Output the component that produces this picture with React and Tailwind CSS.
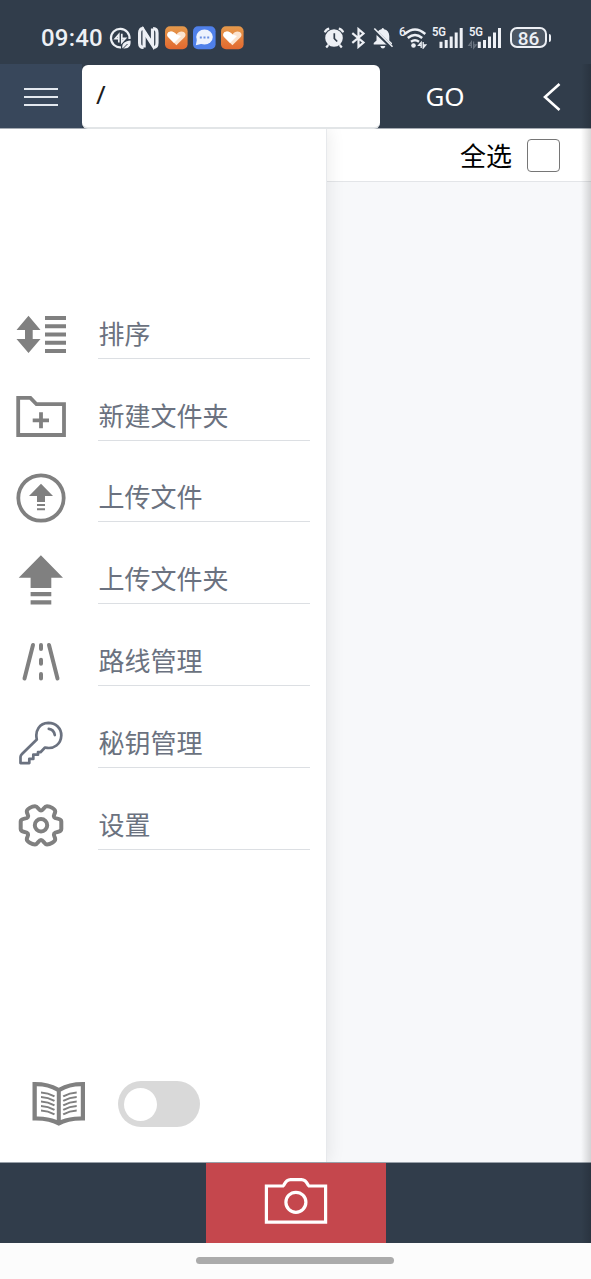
import React, { useState } from 'react';

const SortIcon = () => (
  <svg className="w-[50px] h-[50px]" viewBox="16 309 50 50" fill="#808080">
    <path d="M28.5 315.8L40.5 330H32.7V339H40.5L28.5 353L16.5 339H25V330H16.5Z" />
    <path d="M45 316h21v4h-21zM45 324.3h21v4h-21zM45 332.5h21v4h-21zM45 340.7h21v4h-21zM45 349h21v4h-21z" />
  </svg>
);

const NewFolderIcon = () => (
  <svg className="w-[50px] h-[50px]" viewBox="16 391 50 50" fill="none" stroke="#808080" strokeWidth="3.8">
    <path d="M18.2 397.9H30.4L36.5 404.2H64V435H18.2Z" />
    <path d="M41 412.3V428.3M32.7 420.3H49" />
  </svg>
);

const UploadFileIcon = () => (
  <svg className="w-[50px] h-[50px]" viewBox="16 473 50 50" fill="#808080">
    <circle cx="41" cy="498" r="22.7" fill="none" stroke="#808080" strokeWidth="3.8" />
    <path d="M41 483.7L53 496H45V502H37V496H29Z" />
    <path d="M37 504h8v2h-8zM37 508.3h8v2h-8z" />
  </svg>
);

const UploadFolderIcon = () => (
  <svg className="w-[50px] h-[50px]" viewBox="16 555 50 50" fill="#808080">
    <path d="M40.9 555.2L63 577.8H51.3V588H30.6V577.8H18.7Z" />
    <path d="M30.6 592h20.7v4.2H30.6zM30.6 600.3h20.7v4.2H30.6z" />
  </svg>
);

const RouteIcon = () => (
  <svg className="w-[50px] h-[50px]" viewBox="16 637 50 50" fill="none" stroke="#808080" strokeWidth="4" strokeLinecap="round">
    <path d="M33 645L24.5 678.5M49 645L57.5 678.5M41 645V649M41 659.7V663.7M41 674V678.5" />
  </svg>
);

const KeyIcon = () => (
  <svg className="w-[50px] h-[50px]" viewBox="16 718.5 50 50" fill="none" stroke="#6b7280" strokeWidth="2.7" strokeLinejoin="round" strokeLinecap="round">
    <path d="M36.8 740C34.8 731 39.5 723.7 48.3 723.4C56 723.4 61.3 729 61.3 736C61 744.5 54 750.2 45 748L40.5 752.7H38V755.2H33.3V759.4H29.3V763.6H20.5V757.5Q20.5 756 22 754.5Z" />
    <path d="M48.8 729.4Q53.7 729.8 54.8 735.6" />
  </svg>
);

const GearIcon = () => (
  <svg className="w-[50px] h-[50px]" viewBox="16 800 50 50" fill="none" stroke="#808080" strokeWidth="4" strokeLinejoin="round">
    <circle cx="41" cy="825.3" r="6.2" />
    <path d="M41 810.5C43.5 810.5 44 806.3 47 806.3C50 806.3 55.2 808.8 55.2 811.5C55.2 814 53 814.8 54.2 817.2C55.6 819.5 61.3 817.7 61.3 821.5V829C61.3 833 55.6 831.2 54.2 833.5C53 835.9 55.2 836.7 55.2 839.2C55.2 841.8 50 844.4 47 844.4C44 844.4 43.5 840 41 840C38.5 840 38 844.4 35 844.4C32 844.4 26.8 841.8 26.8 839.2C26.8 836.7 29 835.9 27.8 833.5C26.4 831.2 20.7 833 20.7 829V821.5C20.7 817.7 26.4 819.5 27.8 817.2C29 814.8 26.8 814 26.8 811.5C26.8 808.8 32 806.3 35 806.3C38 806.3 38.5 810.5 41 810.5Z" />
  </svg>
);

const BookIcon = () => (
  <svg className="w-[53px] h-[46px]" viewBox="32 1081 53 46">
    <path
      d="M32.5 1082Q48 1081.5 58.8 1087.8Q69.5 1081.5 85 1082V1120.5Q69 1119.8 58.8 1125.8Q48.5 1119.8 32.5 1120.5ZM36.8 1086.3V1116.5Q48 1116.3 56.8 1120V1091.5Q48 1086.3 36.8 1086.3ZM80.8 1086.3Q69.5 1086.3 60.8 1091.5V1120Q69.5 1116.3 80.8 1116.5Z"
      fill="#808080"
      fillRule="evenodd"
    />
    <path
      d="M41 1092.5Q48 1092.8 54.5 1096.3M41 1097Q48 1097.3 54.5 1100.8M41 1101.5Q48 1101.8 54.5 1105.3M41 1106Q48 1106.3 54.5 1109.8M41 1110.5Q48 1110.8 54.5 1114.3M76.7 1092.5Q69.7 1092.8 63.2 1096.3M76.7 1097Q69.7 1097.3 63.2 1100.8M76.7 1101.5Q69.7 1101.8 63.2 1105.3M76.7 1106Q69.7 1106.3 63.2 1109.8M76.7 1110.5Q69.7 1110.8 63.2 1114.3"
      fill="none"
      stroke="#808080"
      strokeWidth="2.1"
    />
  </svg>
);

const CameraIcon = () => (
  <svg className="w-[64px] h-[48px]" viewBox="264.5 1177 64 48" fill="none" stroke="#fff" strokeWidth="3.2">
    <path d="M266.9 1186H283.5L284.5 1184.8Q287 1179.6 291 1179.6H302Q306 1179.6 308.5 1184.8L309.5 1186H326.1V1222.1H266.9Z" />
    <circle cx="296.4" cy="1202.3" r="10" />
  </svg>
);

const HeartApp = () => (
  <svg className="w-[23px] h-[24px]" viewBox="165 26 23 24">
    <defs>
      <linearGradient id="heartBg" x1="0" y1="0" x2="0" y2="1">
        <stop offset="0" stopColor="#e59a4c" />
        <stop offset="1" stopColor="#e2682f" />
      </linearGradient>
    </defs>
    <rect x="165" y="26.3" width="22.6" height="23" rx="5" fill="url(#heartBg)" />
    <path d="M176.4 45.2L168.6 37.6C165.8 34.4 168 31.4 171 31.4C173.6 31.4 175 32.8 176.4 34.4C177.8 32.4 179.4 31.4 181.6 31.4C185 31.4 187 34.6 184.3 37.6Z" fill="#fbe3cf" />
    <path d="M176.4 34.4C175 32.8 173.6 31.4 171 31.4C168 31.4 165.8 34.4 168.6 37.6L174 42.9L181 36Z" fill="#fff" />
  </svg>
);

const ChatApp = () => (
  <svg className="w-[23px] h-[24px]" viewBox="193 26 23 24">
    <rect x="193" y="26.3" width="22.6" height="23" rx="5" fill="#4f80ea" />
    <ellipse cx="204.5" cy="37" rx="8.3" ry="7.4" fill="#edf2fd" />
    <path d="M197 39L195.8 45.2L202 43.8Z" fill="#edf2fd" />
    <path d="M199.8 36.5h2v2h-2zM203.5 36.5h2v2h-2zM207.2 36.5h2v2h-2z" fill="#6a8fe3" />
  </svg>
);

const StatusBar = () => (
  <div className="h-[64px] shrink-0 bg-[#313d4b] flex items-center justify-between pl-[41px] pr-[40px] pt-[11px] text-[#edf0f5]">
    <div className="flex items-center gap-[5px]">
      <span className="text-[24px] leading-none font-medium w-[63px] pt-px tracking-[0.2px] font-['Roboto',sans-serif]">09:40</span>
      <svg className="w-[23px] h-[24px]" viewBox="109 26 23 24" fill="none" stroke="currentColor" strokeWidth="2.2">
        <path d="M129.5 39A9.3 9.3 0 1 0 121 47.4" />
        <path d="M118.8 42.5V34.5L115.2 38.7H118.8M121.8 33.7V42.3L125.4 38.3H121.8" strokeWidth="1.7" />
        <path d="M122.3 48.3C121.5 43 125 41.3 130.5 40.5C131.3 46 128.5 49.3 122.3 48.3Z" fill="currentColor" stroke="none" />
        <path d="M122 49.5L127.5 44" stroke="#313d4b" strokeWidth="1" />
      </svg>
      <svg className="w-[23px] h-[24px]" viewBox="137 26 23 24" fill="none">
        <path d="M143.5 28.6Q139.6 28.2 139.6 33V43Q139.6 47.5 143.5 47.3" stroke="#edf0f5" strokeWidth="3.2" />
        <path d="M153.2 47.4Q157 47.8 157 43V33Q157 28.5 153.2 28.7" stroke="#edf0f5" strokeWidth="3.2" />
        <path d="M144.1 47.5V31L152.5 44" stroke="#edf0f5" strokeWidth="3.2" />
        <path d="M152.5 28.5V45L144.1 32" stroke="#edf0f5" strokeWidth="3.2" />
      </svg>
      <HeartApp />
      <ChatApp />
      <HeartApp />
    </div>
    <div className="flex items-center gap-[6px]">
      <svg className="w-[22px] h-[22px]" viewBox="322 27 22 22" fill="none" stroke="currentColor">
        <circle cx="333" cy="38" r="8.8" fill="currentColor" stroke="none" />
        <path d="M323.8 32.3Q325 29.3 328.2 28.6M342.2 32.3Q341 29.3 337.8 28.6M327.3 45L325.2 47.5M338.7 45L340.8 47.5" strokeWidth="2.2" />
        <path d="M333.3 33.3V38.5L336.2 41.5" stroke="#313d4b" strokeWidth="1.7" />
      </svg>
      <svg className="w-[15px] h-[22px]" viewBox="350 27 15 22" fill="none" stroke="currentColor" strokeWidth="2.2">
        <path d="M351.3 33.2L362.5 42.5L357.5 46.8V29.2L362.5 33.5L351.3 42.8" />
      </svg>
      <svg className="w-[22px] h-[22px]" viewBox="370 27 22 22" fill="none">
        <path d="M371.7 44.6V43L374.5 40.5V36Q374.8 30.3 379.5 29.3Q380.8 26.5 382.1 29.3Q387 30.3 387.3 36V40.5L390 43V44.6ZM378.3 46H383.4Q382.6 48.6 380.9 48.6Q379 48.6 378.3 46Z" fill="currentColor" />
        <path d="M371 29L389.8 47.3" stroke="#313d4b" strokeWidth="3.4" />
        <path d="M372.3 28.5L390.5 46.7" stroke="currentColor" strokeWidth="1.6" />
      </svg>
      <div className="flex -ml-px">
        <span className="text-[12px] leading-none font-medium w-[5px] -mt-px font-['Roboto',sans-serif]">6</span>
        <svg className="w-[23px] h-[22px]" viewBox="403 27 23 22" fill="none" stroke="currentColor" strokeWidth="2.4">
          <path d="M403.7 34Q414 24.8 424.3 34M406.8 38Q414 31.8 421.2 38M410 41.8Q414 38.8 418 41.8" />
          <circle cx="412.5" cy="45.5" r="2.3" fill="currentColor" stroke="none" />
          <path d="M420.2 48V42.4L417.6 45.3H420.2M422.2 42V48L424.8 45H422.2" strokeWidth="1.3" />
        </svg>
      </div>
      <div className="flex -ml-px">
        <span className="block text-[12.5px] leading-none font-semibold w-[6px] origin-left scale-x-[0.9] tracking-[-0.3px] whitespace-nowrap -mt-[1px] font-['Roboto',sans-serif]">5G</span>
        <svg className="w-[25px] h-[22px]" viewBox="437 27 25 22" stroke="currentColor" strokeWidth="3">
          <path d="M440 41.8V48M445.2 40V48M450.2 36.5V48M455.2 32.5V48M460.2 28V48" />
        </svg>
      </div>
      <div className="flex">
        <span className="block text-[12.5px] leading-none font-semibold w-[7px] origin-left scale-x-[0.9] tracking-[-0.3px] whitespace-nowrap -mt-[1px] font-['Roboto',sans-serif]">5G</span>
        <svg className="w-[25px] h-[22px] overflow-visible" viewBox="476 27 25 22" fill="none" stroke="currentColor" strokeWidth="3">
          <path d="M471.4 48V41.8L468.8 45.3H471.4M473.6 41.5V48L476.2 44.8H473.6" strokeWidth="1.2" stroke="#67717e" />
          <path d="M479.3 41.8V48M484.5 40V48M489.5 36.5V48M494.5 32.5V48M499.5 28V48" />
        </svg>
      </div>
      <div className="flex items-center ml-[3px]">
        <div className="w-[37px] h-[21px] rounded-[7px] border-2 border-[#edf0f5] bg-[#4b5663] flex items-center justify-center text-[19px] leading-none font-medium pt-px font-['Roboto',sans-serif]">86</div>
        <div className="ml-[2px] w-[2px] h-[8px] rounded-r bg-[#edf0f5]"></div>
      </div>
    </div>
  </div>
);

const MENU = [
  { label: '排序', icon: SortIcon },
  { label: '新建文件夹', icon: NewFolderIcon },
  { label: '上传文件', icon: UploadFileIcon },
  { label: '上传文件夹', icon: UploadFolderIcon },
  { label: '路线管理', icon: RouteIcon },
  { label: '秘钥管理', icon: KeyIcon },
  { label: '设置', icon: GearIcon },
];

const App = () => {
  const [path, setPath] = useState('/');
  const [reading, setReading] = useState(false);

  return (
    <div className="w-full h-screen flex flex-col overflow-hidden bg-[#fcfcfc] font-['Noto_Sans','Noto_Sans_CJK_SC',sans-serif]">
      <StatusBar />

      <div className="relative flex-1 min-h-0 flex flex-col">
        {/* Address bar */}
        <div className="h-[65px] shrink-0 flex bg-[#313d4b] border-b border-[#a5abb3] text-white">
          <button className="w-[82px] bg-[#38475b] flex flex-col items-center justify-center gap-[6.6px] pt-[2px]">
            <span className="block w-[34px] h-[1.5px] bg-[#e3e8ef]"></span>
            <span className="block w-[34px] h-[1.5px] bg-[#e3e8ef]"></span>
            <span className="block w-[34px] h-[1.5px] bg-[#e3e8ef]"></span>
          </button>
          <input
            value={path}
            onChange={(e) => setPath(e.target.value)}
            className="w-[298px] h-[64px] mt-px rounded-[6px] bg-white border-b-2 border-[#e2e5e7] px-[14px] pb-[4px] text-[26px] font-normal text-[#1c1c1c] outline-none font-['Noto_Sans',sans-serif]"
          />
          <button className="w-[130px] text-[26px] font-normal font-['Noto_Sans',sans-serif]">GO</button>
          <button className="flex-1 flex items-center justify-center pt-px">
            <svg className="w-[20px] h-[30px]" viewBox="541 82 20 30" fill="none" stroke="#fff" strokeWidth="2.6">
              <path d="M559.5 84L545 97L559.5 110" />
            </svg>
          </button>
        </div>

        <div className="flex-1 min-h-0 flex">
          {/* Side menu */}
          <div className="relative z-10 w-[327px] bg-white border-r border-[#e7e9ec] flex flex-col justify-between shadow-[2px_0_16px_rgba(0,0,0,0.08)] [clip-path:inset(0_-24px_0_0)]">
            <div className="pt-[164.5px]">
              {MENU.map(({ label, icon: Icon }) => (
                <div key={label} className="h-[81.8px] flex items-center pl-[16px] pr-[16px]">
                  <Icon />
                  <div className="ml-[32px] w-[211.5px] h-[49px] border-b border-[#dcdfe3] flex items-center pl-[0.5px] text-[26px] leading-none text-[#6b7280]">
                    {label}
                  </div>
                </div>
              ))}
            </div>
            <div className="flex items-center pl-[32px] pb-[35px]">
              <BookIcon />
              <button
                onClick={() => setReading(!reading)}
                className={`ml-[33px] w-[82px] h-[46px] rounded-full flex items-center px-[6px] ${
                  reading ? 'bg-[#2196f3] justify-end' : 'bg-[#d9d9d9]'
                }`}
              >
                <span className="block w-[33px] h-[33px] rounded-full bg-white"></span>
              </button>
            </div>
          </div>

          {/* File list */}
          <div className="flex-1 bg-[#f7f8fa]">
            <label className="h-[53px] flex items-center justify-end gap-[15px] pr-[31px] bg-white border-b border-[#e3e5e8] text-[26px] leading-none text-black">
              <span className="pt-px">全选</span>
              <input type="checkbox" className="appearance-none w-[33px] h-[33px] rounded-[4px] border-[1.5px] border-[#767676] bg-white" />
            </label>
          </div>
        </div>

        {/* Bottom bar */}
        <div className="h-[81px] shrink-0 flex bg-[#313d4b] border-t border-[#98a0a9]">
          <button className="ml-[206px] w-[180px] bg-[#c5474d] flex items-center justify-center pb-[4px]">
            <CameraIcon />
          </button>
        </div>

        <div className="absolute right-0 top-0 bottom-0 w-[10px] bg-linear-to-l from-black/15 to-transparent pointer-events-none"></div>
      </div>

      <div className="h-[36px] shrink-0 flex justify-center pr-[2px]">
        <div className="mt-[14px] w-[198px] h-[7px] rounded-full bg-[#ababab]"></div>
      </div>
    </div>
  );
};

export default App;
